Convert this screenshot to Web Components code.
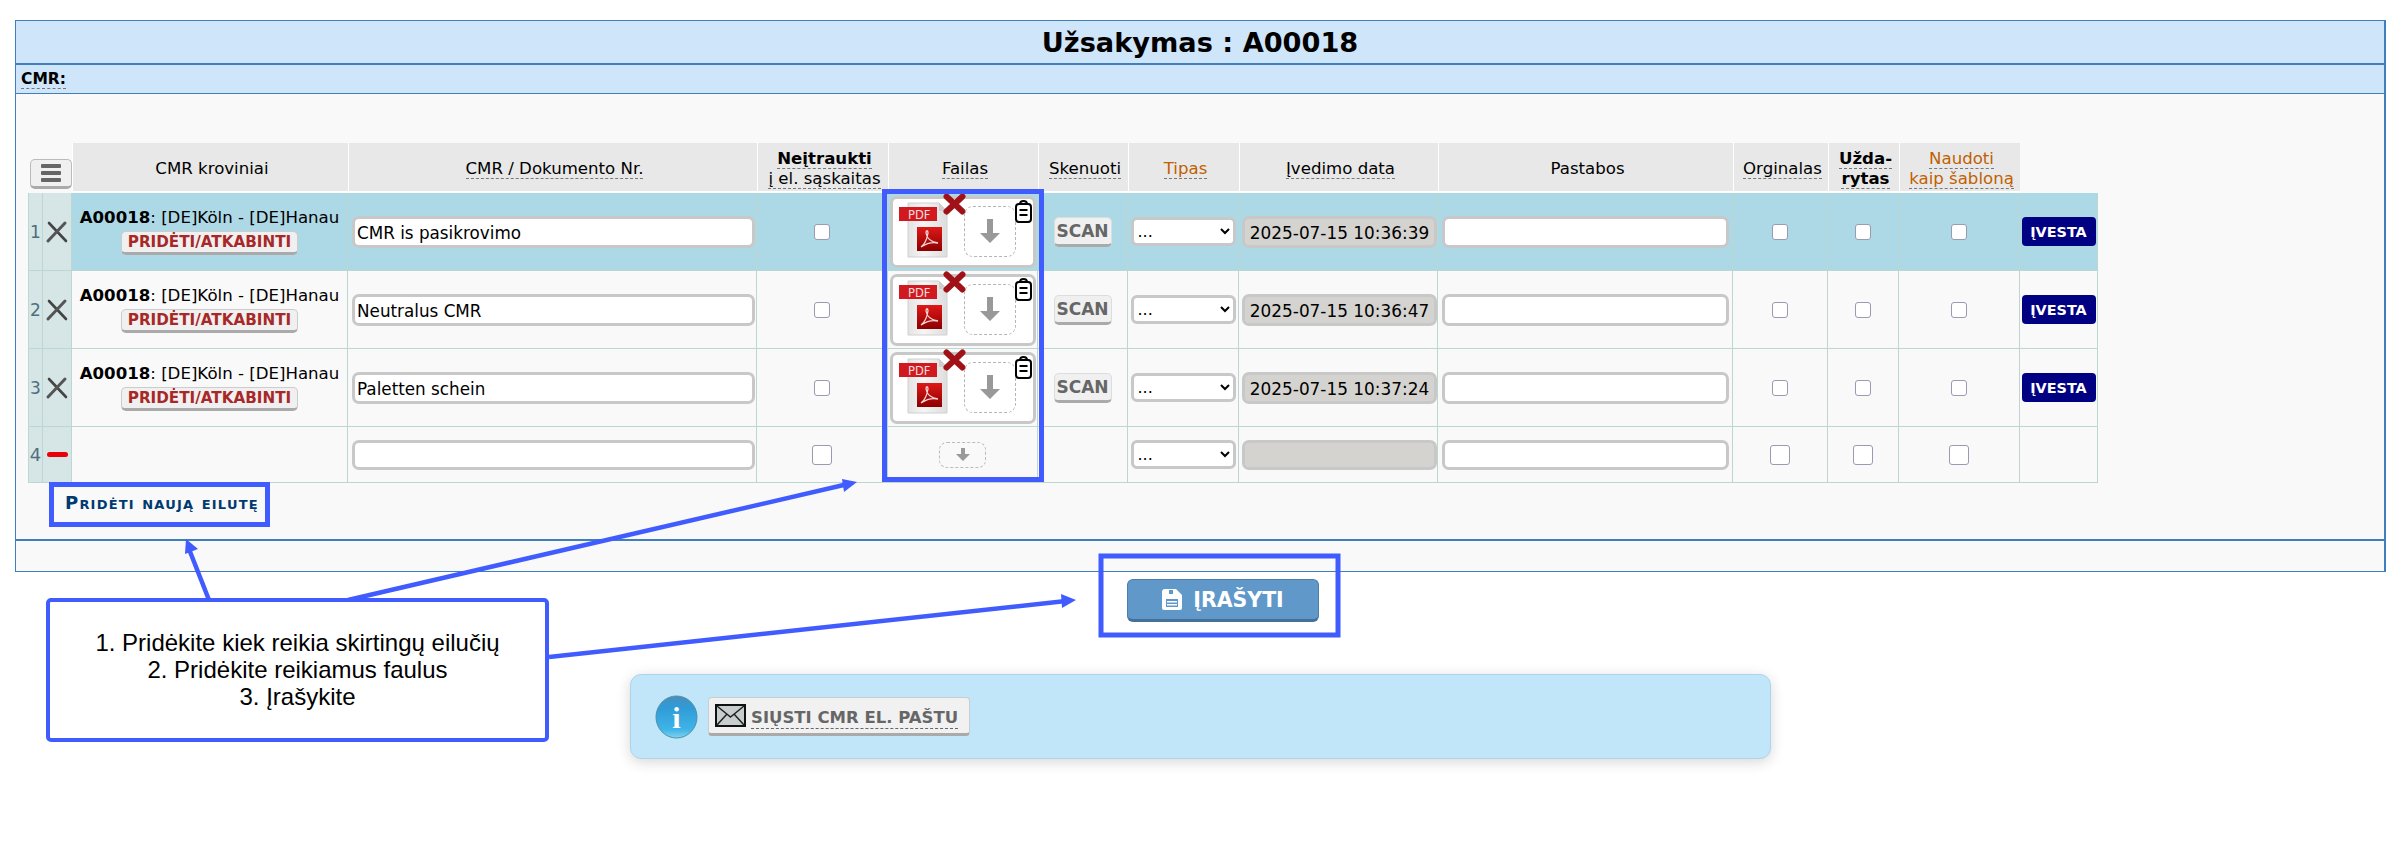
<!DOCTYPE html>
<html lang="lt">
<head>
<meta charset="utf-8">
<title>Užsakymas A00018</title>
<style>
    html, body { margin: 0; padding: 0; background: #fff; }
    body { font-family: "DejaVu Sans", Verdana, sans-serif; font-size: 16.4px; color: #000; }
</style>
</head>
<body>
<order-page>
    <order-panel heading="Užsakymas : A00018" label="CMR:">
        <cmr-table>
            <cmr-head></cmr-head>
            <cmr-row index="1" doc="CMR is pasikrovimo" date="2025-07-15 10:36:39" active></cmr-row>
            <cmr-row index="2" doc="Neutralus CMR" date="2025-07-15 10:36:47"></cmr-row>
            <cmr-row index="3" doc="Paletten schein" date="2025-07-15 10:37:24"></cmr-row>
            <cmr-row index="4" blank></cmr-row>
        </cmr-table>
        <add-row-link>Pridėti naują eilutę</add-row-link>
    </order-panel>
    <save-bar>Įrašyti</save-bar>
    <info-box>Siųsti CMR el. paštu</info-box>
    <note-overlay>
        1. Pridėkite kiek reikia skirtingų eilučių<br>
        2. Pridėkite reikiamus faulus<br>
        3. Įrašykite
    </note-overlay>
</order-page>

<script>
const BLUE = '#405cff'

class OrderPage extends HTMLElement {
    constructor() {
        super()
        this.attachShadow( { mode: 'open' } )
    }
    connectedCallback () {
        this.shadowRoot.innerHTML = `
            <style>
                :host { display: block; position: relative; width: 2394px; height: 860px; overflow: hidden; padding-top: 20px; box-sizing: border-box; }
                .wrap { margin: 0 8px 0 15px; }
            </style>
            <div class="wrap"><slot></slot></div>
        `
    }
}

class OrderPanel extends HTMLElement {
    constructor() {
        super()
        this.attachShadow( { mode: 'open' } )
    }
    connectedCallback () {
        this.shadowRoot.innerHTML = `
            <style>
                :host { display: block; box-sizing: border-box; height: 552px; border: 1px solid #3f7fbb; border-right-width: 2px; background: #f9f9f9; }
                .title { height: 44px; box-sizing: border-box; background: #cfe5fa; border-bottom: 2px solid #3f7fbb; font-size: 27.2px; font-weight: bold; text-align: center; line-height: 43px; }
                .label { height: 29px; box-sizing: border-box; background: #cfe5fa; border-bottom: 1px solid #3f7fbb; padding: 5px 0 0 5px; font-size: 15.500px; font-weight: bold; line-height: 18px; }
                .label span { border-bottom: 1px dashed #777; }
                .body { height: 447px; box-sizing: border-box; padding: 49px 0 0 12px; border-bottom: 2px solid #3f7fbb; }
            </style>
            <div class="title">${this.getAttribute( 'heading' )}</div>
            <div class="label"><span>${this.getAttribute( 'label' )}</span></div>
            <div class="body"><slot></slot></div>
        `
    }
}

class CmrTable extends HTMLElement {
    constructor() {
        super()
        this.attachShadow( { mode: 'open' } )
    }
    connectedCallback () {
        this.shadowRoot.innerHTML = `
            <style>
                :host { display: block; width: 2070px; --cols: 15px 29px 276px 409px 131px 150px 90px 111px 199px 295px 95px 71px 121px 78px; --line: #bcd6d0; }
            </style>
            <slot></slot>
        `
    }
}

class CmrHead extends HTMLElement {
    constructor() {
        super()
        this.attachShadow( { mode: 'open' } )
    }
    connectedCallback () {
        this.shadowRoot.innerHTML = `
            <style>
                :host { display: grid; grid-template-columns: var(--cols); height: 50px; }
                .th { background: #e8e8e8; border-left: 1px solid #fff; border-bottom: 2px solid #fff; box-sizing: border-box; padding: 3px 0 0 3px; display: flex; flex-direction: column; align-items: center; justify-content: center; font-size: 16.600px; line-height: 20px; text-align: center; }
                .u { border-bottom: 1px dashed #777; line-height: 19px; white-space: nowrap; }
                b { font-weight: bold; }
                .or { color: #c06000; }
                .menu { grid-column: span 2; display: flex; align-items: flex-end; justify-content: flex-end; padding-bottom: 4px; }
                .btn { width: 42px; height: 30px; box-sizing: border-box; background: #f0f0f0; border: 1px solid #bbb; border-bottom: 3px solid #aaa; border-radius: 5px; display: flex; flex-direction: column; align-items: center; justify-content: center; gap: 3px; }
                .btn i { display: block; width: 20px; height: 4px; background: #666; border-radius: 1px; }
            </style>
            <div class="menu"><div class="btn"><i></i><i></i><i></i></div></div>
            <div class="th">CMR kroviniai</div>
            <div class="th"><span class="u">CMR / Dokumento Nr.</span></div>
            <div class="th"><b class="u">Neįtraukti</b><span class="u">į el. sąskaitas</span></div>
            <div class="th"><span class="u">Failas</span></div>
            <div class="th"><span class="u">Skenuoti</span></div>
            <div class="th"><span class="u or">Tipas</span></div>
            <div class="th"><span class="u">Įvedimo data</span></div>
            <div class="th">Pastabos</div>
            <div class="th"><span class="u">Orginalas</span></div>
            <div class="th"><b class="u">Užda-</b><b class="u">rytas</b></div>
            <div class="th"><span class="u or">Naudoti</span><span class="u or">kaip šabloną</span></div>
        `
    }
}

class FileCard extends HTMLElement {
    constructor() {
        super()
        this.attachShadow( { mode: 'open' } )
    }
    connectedCallback () {
        this.shadowRoot.innerHTML = `
            <style>
                :host { display: block; position: relative; width: 146px; height: 72px; box-sizing: border-box; background: #fff; border: 3px solid #c8c8c8; border-radius: 7px; }
                .pdf { position: absolute; left: 6px; top: 1px; }
                .del { position: absolute; left: 50px; top: -6px; }
                .drop { position: absolute; left: 71px; top: 7px; width: 52px; height: 51px; box-sizing: border-box; border: 1.500px dashed #b5b5b5; border-radius: 9px; display: flex; align-items: center; justify-content: center; }
                .clip { position: absolute; left: 121px; top: 1px; }
            </style>
            <svg class="pdf" width="50" height="60" viewBox="0 0 50 60">
                <defs>
                    <linearGradient id="red" x1="0" y1="0" x2="0" y2="1"><stop offset="0" stop-color="#e01818"/><stop offset="1" stop-color="#8c0000"/></linearGradient>
                    <linearGradient id="page" x1="0" y1="0" x2="1" y2="0"><stop offset="0" stop-color="#e4e3e3"/><stop offset=".4" stop-color="#f6f5f5"/><stop offset="1" stop-color="#dedddd"/></linearGradient>
                </defs>
                <path d="M9 3h31l8 8v46H9z" fill="url(#page)" stroke="#d0d0d0"/>
                <path d="M40 3v8h8z" fill="#cfcfcf"/>
                <rect x="0" y="7" width="38" height="14" fill="#d01a20"/>
                <text x="9" y="18.500" font-family="DejaVu Sans, sans-serif" font-size="11.500" fill="#f6dede">PDF</text>
                <rect x="18" y="27" width="25" height="24" fill="url(#red)"/>
                <path d="M22 47c4-3 6-8 7-14 0-3-2-3-2 0 1 6 5 9 12 10-5-1-11 0-17 4z" fill="none" stroke="#f6d8d8" stroke-width="1.300"/>
            </svg>
            <svg class="del" width="23" height="22" viewBox="0 0 23 22"><path d="M3.500 3.500l16 15M19.500 3.500l-16 15" stroke="#a01218" stroke-width="6" stroke-linecap="round"/></svg>
            <div class="drop"><svg width="22" height="26" viewBox="0 0 22 26"><path d="M8 1h6v14h7L11 25 1 15h7z" fill="#999"/></svg></div>
            <svg class="clip" width="19" height="23" viewBox="0 0 19 23" fill="none" stroke="#000" stroke-width="2"><rect x="2" y="4" width="15" height="18" rx="3"/><path d="M6 4c0-2 1-3 3.500-3S13 2 13 4zM5.500 10h8M5.500 15h8" /></svg>
        `
    }
}

class CmrRow extends HTMLElement {
    constructor() {
        super()
        this.attachShadow( { mode: 'open' } )
    }
    connectedCallback () {
        const blank = this.hasAttribute( 'blank' )
        const doc = this.getAttribute( 'doc' ) || ''
        const date = this.getAttribute( 'date' ) || ''
        const route = blank ? '' : `<div class="route"><b>A00018</b>: [DE]Köln - [DE]Hanau</div><button class="link">PRIDĖTI/ATKABINTI</button>`
        const mark = blank ? '<i class="minus"></i>' : `<svg width="24" height="24" viewBox="0 0 24 24"><path d="M4 3l17 18" stroke="#444" stroke-width="2.600" stroke-linecap="round"/><path d="M20 3L3 21" stroke="#555" stroke-width="3" stroke-linecap="round"/></svg>`
        const file = blank ? `<div class="drop-small"><svg width="14" height="13" viewBox="0 0 14 13"><path d="M5 0h4v6h5L7 13 0 6h5z" fill="#999"/></svg></div>` : '<file-card></file-card>'
        this.shadowRoot.innerHTML = `
            <style>
                :host { display: grid; grid-template-columns: var(--cols); height: ${blank ? 56 : 78}px; }
                :host([active]) { background: #add8e6; }
                .c { box-sizing: border-box; border-right: 1px solid var(--line); border-bottom: 1px solid var(--line); display: flex; flex-direction: column; align-items: center; justify-content: center; min-width: 0; }
                .n { background: #d6e6e6; color: #4f6f7f; font-size: ${blank ? 18 : 17}px; border-left: 1px solid var(--line); }
                .x { background: #d6e6e6; }
                .route { font-size: 16.600px; line-height: 20px; white-space: nowrap; }
                .link { margin: 3px 0 0; width: 177px; height: 24px; box-sizing: border-box; padding: 0; background: #f0f0f0; border: 1px solid #ccc; border-bottom: 3px solid #aaa; border-radius: 5px; color: #a82828; font: bold 15.200px "DejaVu Sans", sans-serif; white-space: nowrap; }
                .minus { display: block; width: 21px; height: 5px; border-radius: 3px; background: #e8000b; }
                input[type=text], .date { width: 100%; box-sizing: border-box; height: ${blank ? 30 : 32}px; border: 3px solid #c8c8c8; border-radius: 7px; background: #fff; font: 16.800px "DejaVu Sans", sans-serif; padding: 2px 2px 0; outline: none; color: #000; }
                .doc { padding: 0 1px 0 4px; }
                .when { padding: 0 0 0 3px; }
                .rem { padding: 0 3px 0 4px; }
                .date { background: #d4d3cf; display: flex; align-items: center; justify-content: center; white-space: nowrap; font-size: 16.900px; }
                input[type=checkbox] { appearance: none; margin: 0; width: ${blank ? 20 : 16}px; height: ${blank ? 20 : 16}px; background: #fff; border: 1px solid #9a9ab2; border-radius: 3px; }
                .scan { width: 58px; height: 30px; box-sizing: border-box; padding: 0; background: #f0f0f0; border: 1px solid #ddd; border-bottom: 3px solid #aaa; border-radius: 5px; color: #666; font: bold 17px "DejaVu Sans", sans-serif; }
                select { width: 105px; height: 29px; box-sizing: border-box; border: 3px solid #c8c8c8; border-radius: 6px; background: #fff; font: 16px "DejaVu Sans", sans-serif; color: #000; padding: 0; }
                .done { width: 74px; height: 29px; box-sizing: border-box; padding: 0; background: #000082; border: 0; border-radius: 4px; color: #fff; font: bold 14.400px "DejaVu Sans", sans-serif; }
                .drop-small { width: 47px; height: 26px; box-sizing: border-box; border: 1.500px dashed #bbb; border-radius: 8px; display: flex; align-items: center; justify-content: center; }
            </style>
            <div class="c n">${this.getAttribute( 'index' )}</div>
            <div class="c x">${mark}</div>
            <div class="c">${route}</div>
            <div class="c doc"><input type="text" value="${doc}"></div>
            <div class="c"><input type="checkbox"></div>
            <div class="c">${file}</div>
            <div class="c">${blank ? '' : '<button class="scan">SCAN</button>'}</div>
            <div class="c"><select><option>...</option></select></div>
            <div class="c when"><div class="date">${date}</div></div>
            <div class="c rem"><input type="text"></div>
            <div class="c"><input type="checkbox"></div>
            <div class="c"><input type="checkbox"></div>
            <div class="c"><input type="checkbox"></div>
            <div class="c">${blank ? '' : '<button class="done">ĮVESTA</button>'}</div>
        `
    }
}

class AddRowLink extends HTMLElement {
    constructor() {
        super()
        this.attachShadow( { mode: 'open' } )
    }
    connectedCallback () {
        this.shadowRoot.innerHTML = `
            <style>
                :host { display: inline-block; margin: 9px 0 0 37px; font-size: 18px; letter-spacing: 1.200px; font-weight: bold; font-variant: small-caps; color: #003a70; line-height: 22px; }
            </style>
            <slot></slot>
        `
    }
}

class SaveBar extends HTMLElement {
    constructor() {
        super()
        this.attachShadow( { mode: 'open' } )
    }
    connectedCallback () {
        this.shadowRoot.innerHTML = `
            <style>
                :host { display: flex; justify-content: center; padding: 7px 0 0 45px; }
                .save { display: flex; align-items: center; justify-content: center; gap: 11px; width: 192px; height: 43px; box-sizing: border-box; background: #6098c9; border: 1px solid #4d7ea8; border-bottom: 3px solid #45709a; border-radius: 6px; color: #fff; font: bold 20.500px "DejaVu Sans", sans-serif; text-transform: uppercase; }
            </style>
            <div class="save">
                <svg width="20" height="21" viewBox="0 0 20 21"><path d="M3 0h11l6 6v13a2 2 0 0 1-2 2H2a2 2 0 0 1-2-2V3a3 3 0 0 1 3-3z" fill="#fff"/><path d="M7 1h4v4H7z" fill="#6098c9"/><path d="M4 10h12v8H4z" fill="#6098c9"/><path d="M5 12h10v1.500H5zM5 15h10v1.500H5z" fill="#fff"/></svg>
                <span><slot></slot></span>
            </div>
        `
    }
}

class InfoBox extends HTMLElement {
    constructor() {
        super()
        this.attachShadow( { mode: 'open' } )
    }
    connectedCallback () {
        this.shadowRoot.innerHTML = `
            <style>
                :host { display: flex; align-items: center; gap: 10px; width: 1141px; height: 85px; box-sizing: border-box; margin: 52px auto 0; padding: 0 0 0 24px; background: #c2e6f9; border: 1px solid #aed4ea; border-radius: 11px; box-shadow: 0 3px 14px rgba(0,0,0,.16); }
                .mail { display: flex; align-items: center; gap: 5px; width: 262px; height: 39px; box-sizing: border-box; padding: 0 0 0 6px; background: #f1f1f1; border: 1px solid #ccc; border-bottom: 3px solid #aaa; border-radius: 4px; color: #666; font: bold 16.500px "DejaVu Sans", sans-serif; text-transform: uppercase; white-space: nowrap; }
                .mail span { border-bottom: 1px dashed #666; margin-top: 5px; line-height: 20px; }
            </style>
            <svg width="43" height="44" viewBox="0 0 43 44">
                <defs>
                    <linearGradient id="ball" x1="0" y1="0" x2="0" y2="1"><stop offset="0" stop-color="#4a8fb8"/><stop offset=".25" stop-color="#2f9ad6"/><stop offset=".8" stop-color="#3fb4e8"/><stop offset="1" stop-color="#7fd4ee"/></linearGradient>
                </defs>
                <ellipse cx="21.500" cy="22" rx="20.500" ry="21" fill="url(#ball)" stroke="#4f8fa8"/>
                <text x="21.500" y="33" text-anchor="middle" font-family="Liberation Serif, serif" font-weight="bold" font-size="30" fill="#fff">i</text>
            </svg>
            <div class="mail">
                <svg width="31" height="23" viewBox="0 0 31 23"><rect x="1" y="1" width="29" height="21" fill="#c8cece" stroke="#111" stroke-width="2"/><path d="M2 2l13.500 11L29 2M2 21l10-11M29 21L19 10" fill="none" stroke="#222" stroke-width="1.500"/></svg>
                <span><slot></slot></span>
            </div>
        `
    }
}

class NoteOverlay extends HTMLElement {
    constructor() {
        super()
        this.attachShadow( { mode: 'open' } )
    }
    connectedCallback () {
        this.shadowRoot.innerHTML = `
            <style>
                :host { position: absolute; left: 0; top: 0; width: 2394px; height: 860px; pointer-events: none; }
                svg { position: absolute; left: 0; top: 0; }
                .note { position: absolute; left: 46px; top: 598px; width: 503px; height: 144px; box-sizing: border-box; border: 4px solid ${BLUE}; border-radius: 5px; background: #fff; display: flex; align-items: center; justify-content: center; text-align: center; font: 24px/27px "Liberation Sans", Arial, sans-serif; color: #000; padding-bottom: 2px; }
            </style>
            <svg width="2394" height="860" fill="none" stroke="${BLUE}">
                <rect x="51.500" y="484.500" width="216" height="40" stroke-width="5"/>
                <rect x="884.500" y="191.500" width="157" height="288" stroke-width="5"/>
                <rect x="1101" y="556" width="237" height="79" stroke-width="5"/>
                <path d="M209 600L189 549" stroke-width="4.500"/>
                <path d="M186 539l12 10-13 5z" fill="${BLUE}" stroke="none"/>
                <path d="M348 600L848 484" stroke-width="4.500"/>
                <path d="M857 482l-15-3 2 13z" fill="${BLUE}" stroke="none"/>
                <path d="M549 657L1066 601" stroke-width="4.500"/>
                <path d="M1076 600l-15-6 1 14z" fill="${BLUE}" stroke="none"/>
            </svg>
            <div class="note"><div><slot></slot></div></div>
        `
    }
}

customElements.define( 'order-page', OrderPage )
customElements.define( 'order-panel', OrderPanel )
customElements.define( 'cmr-table', CmrTable )
customElements.define( 'cmr-head', CmrHead )
customElements.define( 'file-card', FileCard )
customElements.define( 'cmr-row', CmrRow )
customElements.define( 'add-row-link', AddRowLink )
customElements.define( 'save-bar', SaveBar )
customElements.define( 'info-box', InfoBox )
customElements.define( 'note-overlay', NoteOverlay )
</script>
</body>
</html>
